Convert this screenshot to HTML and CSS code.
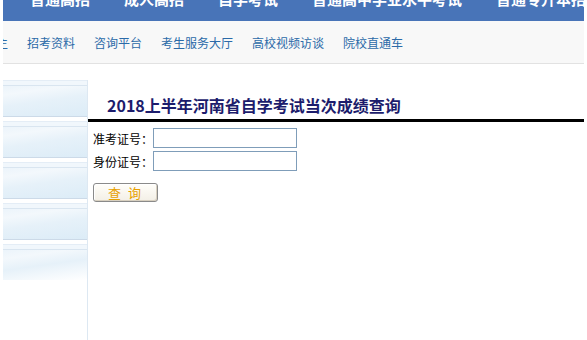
FILE: index.html
```html
<!DOCTYPE html>
<html lang="zh-CN">
<head>
    <meta charset="UTF-8">
    <meta name="viewport" content="width=device-width, initial-scale=1.0">
    <title>2018上半年河南省自学考试当次成绩查询</title>
    <link rel="stylesheet" href="styles.css">
</head>
<body>
    <div class="page">
        <div class="topbar">
            <a href="#">普通高招</a>
            <a href="#">成人高招</a>
            <a href="#">自学考试</a>
            <a href="#">普通高中学业水平考试</a>
            <a href="#">普通专升本招生</a>
        </div>

        <div class="subnav">
            <a href="#" class="cut">主</a>
            <a href="#">招考资料</a>
            <a href="#">咨询平台</a>
            <a href="#">考生服务大厅</a>
            <a href="#">高校视频访谈</a>
            <a href="#">院校直通车</a>
        </div>

        <div class="content">
            <div class="sidebar">
                <div class="side-block"></div>
                <div class="side-block"></div>
                <div class="side-block"></div>
                <div class="side-block"></div>
                <div class="side-block last"></div>
            </div>

            <div class="main">
                <h2 class="title">2018上半年河南省自学考试当次成绩查询</h2>

                <form class="query-form" onsubmit="return false;">
                    <div class="row">
                        <label for="zkzh">准考证号：</label>
                        <input type="text" id="zkzh">
                    </div>
                    <div class="row">
                        <label for="sfzh">身份证号：</label>
                        <input type="text" id="sfzh">
                    </div>
                    <button type="submit" class="btn">查 询</button>
                </form>
            </div>
        </div>
    </div>
</body>
</html>
```

FILE: styles.css
```css
body {
    margin: 0;
    background: #fff;
    font-family: "Noto Sans CJK SC", "Liberation Sans", sans-serif;
    font-size: 12px;
    color: #000;
    overflow: hidden;
}
a {
    text-decoration: none;
}
.page {
    margin-left: 3px;
    width: 581px;
}

/* top blue bar, page is scrolled a bit so the text is cut */
.topbar {
    height: 36px;
    margin-top: -15px;
    background-color: #4874b8;
    display: flex;
    gap: 34px;
    padding-left: 27px;
    overflow: hidden;
    white-space: nowrap;
}
.topbar a {
    color: #fff;
    font-size: 15px;
    font-weight: bold;
    line-height: 28px;
}

.subnav {
    height: 42px;
    background-color: #f8f8f8;
    border-bottom: 1px solid #e2e2e2;
    display: flex;
    align-items: center;
    gap: 19px;
    overflow: hidden;
    white-space: nowrap;
}
.subnav a {
    color: #2b6aa8;
    font-size: 12px;
}
.subnav a.cut {
    margin-left: -7px;
}

.content {
    display: flex;
    margin-top: 16px;
}
.sidebar {
    width: 84px;
    min-height: 270px;
    border-right: 1px solid #dde8f2;
}
.side-block {
    height: 35px;
    margin-bottom: 4px;
    border-top: 1px solid #e4edf6;
    border-bottom: 1px solid #ccdae8;
    background: linear-gradient(172deg, #e8f2fa 0%, #f3f8fc 30%, #e6f1f9 55%, #dcecf7 100%);
    box-shadow: inset 0 4px 0 #f1f7fc, inset 0 5px 0 #d9e5f0;
}
.side-block.last {
    border-bottom: none;
    background: linear-gradient(172deg, #e8f2fa 0%, #f3f8fc 30%, #e6f1f9 55%, #fff 100%);
}

.main {
    flex: 1;
}
.title {
    margin: 0;
    padding: 16px 0 5px 19px;
    height: 18px;
    line-height: 18px;
    font-size: 16px;
    font-weight: bold;
    color: #1c1c6c;
    border-bottom: 3px solid #000;
}

.query-form {
    padding: 6px 0 0 5px;
}
.row {
    display: flex;
    align-items: center;
    height: 20px;
    margin-bottom: 3px;
}
.row label {
    width: 60px;
    font-size: 12px;
}
.row input {
    box-sizing: border-box;
    width: 144px;
    height: 20px;
    margin: 0;
    border: 1px solid #7f9db9;
    padding: 0 2px;
    background: #fff;
}
.btn {
    margin-top: 9px;
    width: 65px;
    height: 19px;
    padding: 0;
    border: 1px solid #8a8a8a;
    border-radius: 3px;
    background: linear-gradient(#fffefa, #f3efe6);
    box-shadow: inset 1px 1px 0 #fff, inset -1px -1px 0 #d8d0c0;
    color: #e8a000;
    font-family: "Noto Sans CJK SC", sans-serif;
    font-size: 13px;
    line-height: 17px;
    letter-spacing: 2px;
    cursor: pointer;
}
```
